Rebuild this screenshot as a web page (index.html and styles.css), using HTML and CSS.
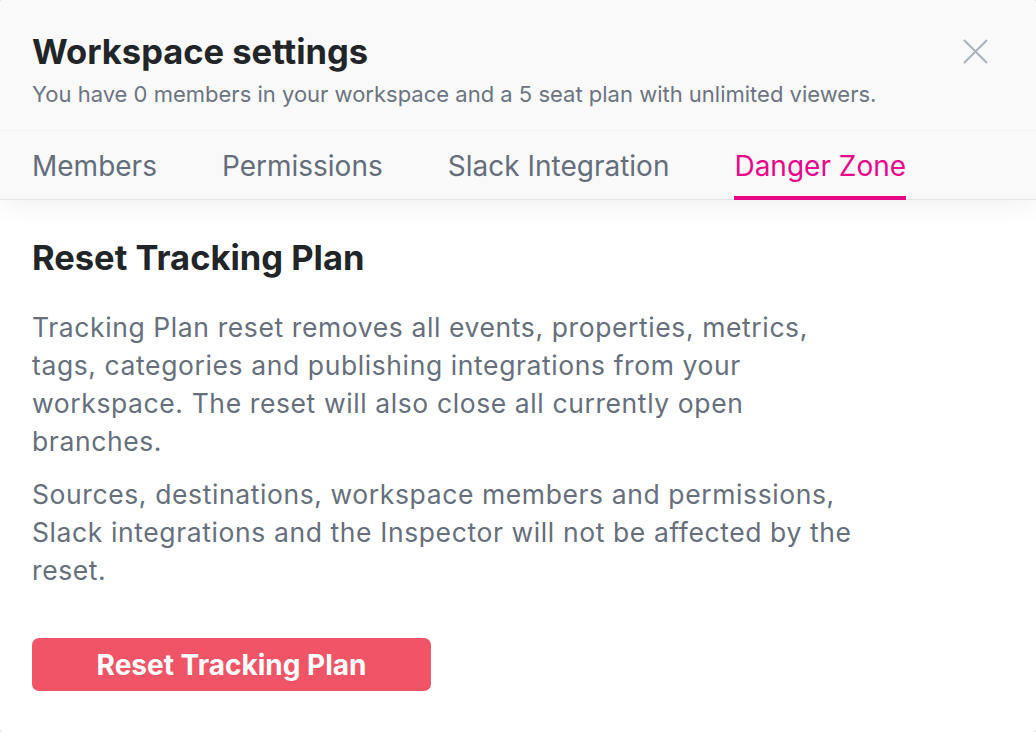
FILE: index.html
```html
<!DOCTYPE html>
<html>
<head>
<meta charset="utf-8">
<link rel="stylesheet" href="styles.css">
</head>
<body>
<div class="modal">
  <header class="head">
    <div class="head-top">
      <div class="titles">
        <h1 class="title">Workspace settings</h1>
        <p class="subtitle">You have 0 members in your workspace and a 5 seat plan with unlimited viewers.</p>
      </div>
      <button class="close" aria-label="Close">
        <svg width="25" height="25" viewBox="0 0 25 25"><path d="M1 1L24 24M24 1L1 24" stroke="#a9b2bd" stroke-width="2" fill="none"/></svg>
      </button>
    </div>
    <nav class="tabs">
      <span class="tab">Members</span>
      <span class="tab">Permissions</span>
      <span class="tab">Slack Integration</span>
      <span class="tab active">Danger Zone</span>
    </nav>
  </header>
  <main class="content">
    <h2 class="section-title">Reset Tracking Plan</h2>
    <p class="text">Tracking Plan reset removes all events, properties, metrics, tags, categories and publishing integrations from your workspace. The reset will also close all currently open branches.</p>
    <p class="text">Sources, destinations, workspace members and permissions, Slack integrations and the Inspector will not be affected by the reset.</p>
    <button class="danger-btn">Reset Tracking Plan</button>
  </main>
</div>
</body>
</html>
```
FILE: styles.css
```css
* { box-sizing: border-box; }
html, body { margin: 0; padding: 0; }
body {
  background: #d9dbde;
  font-family: Inter, "Noto Sans", sans-serif;
  width: 1036px;
  height: 732px;
  overflow: hidden;
}
.modal {
  width: 1036px;
  height: 732px;
  background: #ffffff;
  border-radius: 3px;
  overflow: hidden;
}
.head {
  background: #f9f9fa;
  border-bottom: 1px solid #e4e5e8;
  box-shadow: 0 6px 24px rgba(0,0,0,0.06);
  position: relative;
}
.head-top {
  display: flex;
  justify-content: space-between;
  align-items: flex-start;
  padding: 30px 48px 0 32px;
  height: 131px;
  border-bottom: 1px solid #f0f1f4;
}
.title {
  margin: 0;
  font-size: 34.5px;
  font-weight: 700;
  color: #222528;
  line-height: 44px;
}
.subtitle {
  margin: 5px 0 0;
  font-size: 22px;
  color: #6b7480;
  line-height: 30px;
}
.close {
  background: none;
  border: 0;
  padding: 0;
  margin-top: 9px;
  cursor: pointer;
  display: flex;
}
.tabs {
  display: flex;
  gap: 65px;
  padding: 0 32px;
  height: 68px;
}
.tab {
  font-size: 28px;
  color: #646d79;
  line-height: 30px;
  padding-top: 20px;
  height: 69px;
}
.tab.active {
  color: #e8058a;
  border-bottom: 4px solid #e8058a;
}
.content {
  padding: 36px 32px 0;
}
.section-title {
  margin: 0 0 28px;
  font-size: 34.5px;
  font-weight: 700;
  color: #222528;
  line-height: 44px;
}
.text {
  margin: 0 0 15px;
  width: 826px;
  font-size: 26.5px;
  letter-spacing: 0.6px;
  line-height: 38px;
  color: #666f7b;
}
.danger-btn {
  display: block;
  margin-top: 49px;
  width: 399px;
  height: 53px;
  background: #ef5566;
  border: 0;
  border-radius: 7px;
  color: #ffffff;
  font-family: Inter, "Noto Sans", sans-serif;
  font-size: 28px;
  font-weight: 700;
}
```
